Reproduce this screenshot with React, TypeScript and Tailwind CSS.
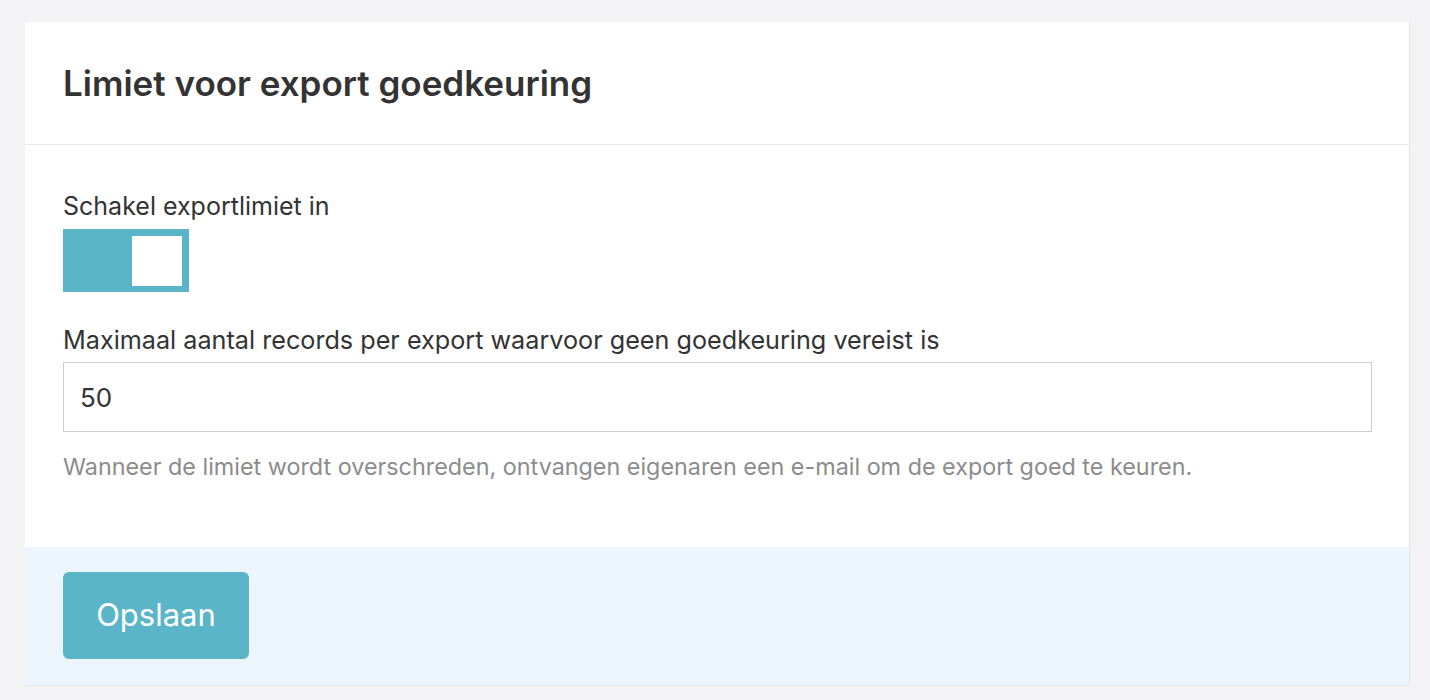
import { useState } from "react";

export default function App() {
  const [enabled, setEnabled] = useState(true);
  const [limit, setLimit] = useState("50");

  return (
    <div
      className="min-h-[700px] bg-[#f3f3f5] pt-[22px] pl-[25px] pr-[20px]"
      style={{ fontFamily: "Inter, 'Noto Sans', sans-serif" }}
    >
      <div className="w-[1385px] bg-white border-r border-b border-[#e4e4e7]">
        {/* Header */}
        <div className="h-[123px] flex items-center px-[38px] border-b border-[#e8e8ea]">
          <h1 className="text-[35px] font-semibold text-[#333] leading-[40px]">
            Limiet voor export goedkeuring
          </h1>
        </div>

        {/* Body */}
        <div className="px-[38px] pt-[46px] pb-[66px]">
          <label className="block text-[25px] text-[#333] leading-[30px]">
            Schakel exportlimiet in
          </label>
          <button
            onClick={() => setEnabled(!enabled)}
            className={`mt-[8px] w-[126px] h-[63px] flex items-center p-[6px] cursor-pointer ${
              enabled ? "bg-[#5bb5c9] justify-end" : "bg-[#ccc] justify-start"
            }`}
          >
            <span className="block w-[50px] h-[50px] bg-white mr-[1px]" />
          </button>

          <label className="block mt-[33px] text-[25.2px] text-[#333] leading-[30px]">
            Maximaal aantal records per export waarvoor geen goedkeuring vereist is
          </label>
          <input
            value={limit}
            onChange={(e) => setLimit(e.target.value)}
            className="mt-[7px] block w-[1309px] h-[70px] border border-[#cccccc] px-[16px] text-[26px] text-[#333] outline-none"
          />
          <p className="mt-[21px] text-[23.35px] text-[#8c8c8c] leading-[28px]">
            Wanneer de limiet wordt overschreden, ontvangen eigenaren een e-mail om de export goed te keuren.
          </p>
        </div>

        {/* Footer */}
        <div className="bg-[#edf5fc] h-[138px] px-[38px] pt-[25px]">
          <button className="w-[186px] h-[87px] rounded-[6px] bg-[#5bb5c9] text-white text-[31px] cursor-pointer">
            Opslaan
          </button>
        </div>
      </div>
    </div>
  );
}
